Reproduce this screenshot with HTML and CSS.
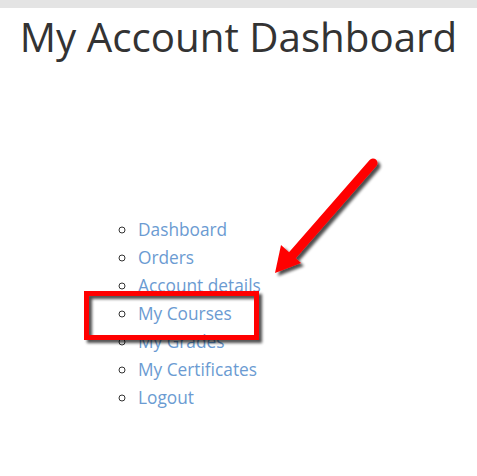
FILE: index.html
```html
<!DOCTYPE html>
<html>
<head>
<meta charset="utf-8">
<link rel="stylesheet" href="styles.css">
</head>
<body>
<div class="topbar"></div>
<main class="page">
  <h1 class="title">My Account Dashboard</h1>
  <ul class="nav">
    <li><a href="#">Dashboard</a></li>
    <li><a href="#">Orders</a></li>
    <li><a href="#">Account details</a></li>
    <li><a href="#">My Courses</a></li>
    <li><a href="#">My Grades</a></li>
    <li><a href="#">My Certificates</a></li>
    <li><a href="#">Logout</a></li>
  </ul>
</main>
<svg class="annot" width="477" height="476" viewBox="0 0 477 476">
  <defs>
    <filter id="sh" x="-20%" y="-20%" width="140%" height="140%">
      <feGaussianBlur in="SourceAlpha" stdDeviation="1.6"/>
      <feOffset dx="3" dy="3" result="b"/>
      <feComponentTransfer><feFuncA type="linear" slope="0.7"/></feComponentTransfer>
      <feMerge><feMergeNode/><feMergeNode in="SourceGraphic"/></feMerge>
    </filter>
  </defs>
  <rect x="86.5" y="293.5" width="170" height="44" fill="none" stroke="#ff0000" stroke-width="5" filter="url(#sh)"/>
  <g filter="url(#sh)">
    <line x1="373" y1="163" x2="290" y2="258" stroke="#ff0000" stroke-width="9" stroke-linecap="round"/>
    <polygon points="275,273 281,245 301,263" fill="#ff0000"/>
  </g>
</svg>
</body>
</html>
```
FILE: styles.css
```css
html, body {
  margin: 0;
  padding: 0;
  background: #ffffff;
}
body {
  font-family: "Open Sans", "Liberation Sans", sans-serif;
  position: relative;
  width: 477px;
  height: 476px;
  overflow: hidden;
}
.topbar {
  height: 8px;
  background: #e4e4e4;
}
.page {
  display: flex;
  flex-direction: column;
}
.title {
  margin: 1px 0 0 0;
  font-size: 40.3px;
  font-weight: 400;
  line-height: 56px;
  color: #333333;
  text-align: center;
}
.nav {
  margin: 151px 0 0 0;
  padding: 0 0 0 138px;
  list-style: circle;
  font-size: 17.3px;
  line-height: 28px;
}
.nav li::marker {
  color: #333333;
}
.nav a {
  color: #6b9bd2;
  text-decoration: none;
}
.annot {
  position: absolute;
  left: 0;
  top: 0;
  pointer-events: none;
}
```
